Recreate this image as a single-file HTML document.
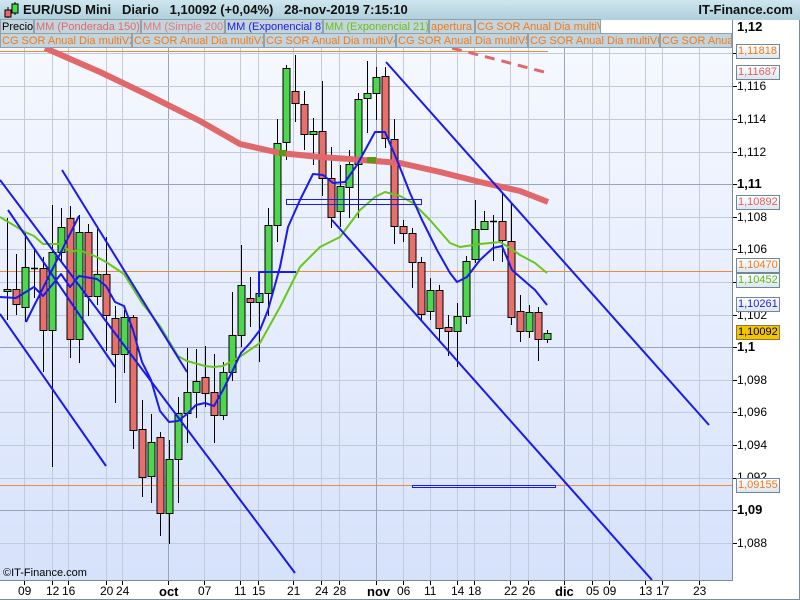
<!DOCTYPE html>
<html><head><meta charset="utf-8"><style>
*{margin:0;padding:0;box-sizing:border-box}
body{width:800px;height:600px;overflow:hidden;background:#fff;font-family:"Liberation Sans",sans-serif;position:relative}
#hdr{position:absolute;left:0;top:0;width:800px;height:20px;background:linear-gradient(#cfe6ef,#aecfdc);}
#hdr .t{position:absolute;left:23px;top:2px;font-size:13px;font-weight:bold;color:#111;white-space:pre}
#hdr .r{position:absolute;right:7px;top:2px;font-size:13px;font-weight:bold;color:#111}
.lg{position:absolute;height:15px;font-size:11px;line-height:14px;background:#c3d4dd;border:1px solid #8ea2ae;padding:0 1px;white-space:nowrap;overflow:hidden}
.ax{position:absolute;left:737px;font-size:12px;color:#000}
.b{font-weight:bold;font-size:13px}
.pl{position:absolute;left:736px;width:44px;height:15px;font-size:11px;line-height:13px;border:1px solid #6f8797;background:linear-gradient(#fff,#dce5ef);padding-left:1px;white-space:nowrap;overflow:hidden}
.dl{position:absolute;top:584px;font-size:12px;color:#000}
</style></head><body>
<div id="hdr">
<svg style="position:absolute;left:3px;top:1px" width="18" height="18"><line x1="5" y1="6" x2="5" y2="17" stroke="#000"/><rect x="2" y="9" width="6" height="7" fill="#e66" stroke="#000"/><line x1="12" y1="1" x2="12" y2="14" stroke="#000"/><rect x="9" y="3" width="6" height="9" fill="#4d4" stroke="#000"/></svg>
<span class="t">EUR/USD Mini   Diario   1,10092 (+0,04%)   28-nov-2019 7:15:10</span>
<span class="r">IT-Finance.com</span>
</div>
<svg style="position:absolute;left:0;top:0" width="800" height="600" id="ch">
<defs><linearGradient id="bg" x1="0" y1="0" x2="0" y2="1"><stop offset="0" stop-color="#f6f8ff"/><stop offset="1" stop-color="#d6e2fb"/></linearGradient></defs>
<rect x="0" y="48" width="732" height="532" fill="url(#bg)"/>
<g id="grid" stroke="#b8c3d6" stroke-width="1"></g>
<g id="hl"></g>
<g id="cd"></g>
<g id="ln" fill="none"></g>
<line x1="732.5" y1="20" x2="732.5" y2="580" stroke="#7a8c9a"/>
<line x1="0" y1="580.5" x2="733" y2="580.5" stroke="#7a8c9a"/>
<line x1="799.5" y1="20" x2="799.5" y2="600" stroke="#7a8c9a"/>
<line x1="0" y1="599.5" x2="800" y2="599.5" stroke="#7a8c9a"/>
<g id="tk" stroke="#000"></g>
</svg>
<div class="lg" style="left:0;top:19px;width:34px;color:#000">Precio</div>
<div class="lg" style="left:34px;top:19px;width:107px;color:#e06a6a">MM (Ponderada 150)</div>
<div class="lg" style="left:141px;top:19px;width:84px;color:#e07a7a">MM (Simple 200)</div>
<div class="lg" style="left:225px;top:19px;width:98px;color:#1a1aee">MM (Exponencial 8)</div>
<div class="lg" style="left:323px;top:19px;width:106px;color:#6ac21a">MM (Exponencial 21)</div>
<div class="lg" style="left:429px;top:19px;width:46px;color:#f07a1a">apertura</div>
<div class="lg" style="left:475px;top:19px;width:126px;color:#f07a1a">CG SOR Anual Dia multiV</div>
<div class="lg" style="left:0;top:33px;width:132px;color:#f07a1a">CG SOR Anual Dia multiV2</div>
<div class="lg" style="left:132px;top:33px;width:132px;color:#f07a1a">CG SOR Anual Dia multiV3</div>
<div class="lg" style="left:264px;top:33px;width:132px;color:#f07a1a">CG SOR Anual Dia multiV4</div>
<div class="lg" style="left:396px;top:33px;width:132px;color:#f07a1a">CG SOR Anual Dia multiV5</div>
<div class="lg" style="left:528px;top:33px;width:132px;color:#f07a1a">CG SOR Anual Dia multiV6</div>
<div class="lg" style="left:660px;top:33px;width:72px;color:#f07a1a">CG SOR Anual</div>
<div class="ax b" style="top:19px">1,12</div>
<div class="ax" style="top:79px">1,116</div>
<div class="ax" style="top:112px">1,114</div>
<div class="ax" style="top:145px">1,112</div>
<div class="ax b" style="top:176px">1,11</div>
<div class="ax" style="top:210px">1,108</div>
<div class="ax" style="top:242px">1,106</div>
<div class="ax" style="top:308px">1,102</div>
<div class="ax b" style="top:339px">1,1</div>
<div class="ax" style="top:373px">1,098</div>
<div class="ax" style="top:405px">1,096</div>
<div class="ax" style="top:438px">1,094</div>
<div class="ax" style="top:470px">1,092</div>
<div class="ax b" style="top:502px">1,09</div>
<div class="ax" style="top:536px">1,088</div>
<div class="pl" style="top:44px;color:#f07a1a">1,11818</div>
<div class="pl" style="top:65px;color:#e06060">1,11687</div>
<div class="pl" style="top:195px;color:#e06060">1,10892</div>
<div class="pl" style="top:258px;color:#f07a1a">1,10470</div>
<div class="pl" style="top:273px;color:#5cb814">1,10452</div>
<div class="pl" style="top:297px;color:#1a1aee">1,10261</div>
<div class="pl" style="top:325px;color:#000;background:#f5c400;border-color:#8a7a40">1,10092</div>
<div class="pl" style="top:478px;color:#f07a1a">1,09155</div>
<div style="position:absolute;left:3px;top:567px;font-size:11px;color:#000">©IT-Finance.com</div>
<div id="dates"></div>
<script>
var NS="http://www.w3.org/2000/svg";
function el(p,t,a){var e=document.createElementNS(NS,t);for(var k in a)e.setAttribute(k,a[k]);document.getElementById(p).appendChild(e);return e;}
var dl=[[24,"09"],[52,"12"],[68,"16"],[106,"20"],[122,"24"],[168,"oct",1],[204,"07"],[240,"11"],[258,"15"],[293,"21"],[321,"24"],[339,"28"],[376,"nov",1],[403,"06"],[430,"11"],[457,"14"],[474,"18"],[510,"22"],[528,"26"],[564,"dic",1],[592,"05"],[609,"09"],[645,"13"],[662,"17"],[699,"23"]];
var dh="";
dl.forEach(function(d){el("grid","line",{x1:d[0]+.5,y1:48,x2:d[0]+.5,y2:580,stroke:d[2]?"#98a6bc":"#c2cbdc"});el("tk","line",{x1:d[0]+.5,y1:581,x2:d[0]+.5,y2:585});
dh+='<div class="dl" style="left:'+(d[0]-(d[2]?9:6))+'px;'+(d[2]?'font-weight:bold;font-size:13px;':'')+'">'+d[1]+'</div>';});
document.getElementById("dates").innerHTML=dh;
[[53,0],[86,0],[119,0],[152,0],[184,1],[217,0],[249,0],[282,0],[315,0],[347,1],[380,0],[412,0],[445,0],[478,0],[510,1],[543,0]].forEach(function(g){el("grid","line",{x1:0,y1:g[0]+.5,x2:732,y2:g[0]+.5,stroke:g[1]?"#98a6bc":"#c2cbdc"});el("tk","line",{x1:733,y1:g[0]+.5,x2:737,y2:g[0]+.5});});
[[51,"#f08a3a",548],[271,"#f08a3a",732],[485,"#f08a3a",732]].forEach(function(h){el("hl","line",{x1:0,y1:h[0]+.5,x2:h[2],y2:h[0]+.5,stroke:h[1]});});
var C=[[289,291,218,320,1],[289,304,254,315,0],[267,307,233,322,1],[268,268,250,298,2],[268,330,257,372,0],[252,330,205,467,1],[227,252,208,262,1],[218,339,206,358,0],[232,339,215,363,1],[232,296,224,316,0],[274,296,229,305,1],[274,315,237,351,0],[318,354,306,403,0],[317,354,310,373,1],[317,430,315,449,0],[429,477,400,497,0],[442,476,414,503,1],[437,513,432,536,0],[459,513,440,544,1],[413,459,397,503,1],[392,413,348,443,1],[381,392,349,418,1],[377,393,346,407,0],[392,415,354,443,0],[372,415,362,420,1],[335,372,292,381,1],[285,335,245,347,1],[298,302,277,327,0],[293,302,272,362,1],[225,293,208,316,1],[143,225,119,242,1],[68,142,65,160,1],[91,103,55,122,0],[104,134,91,150,0],[131,134,118,165,1],[131,178,81,196,0],[178,217,147,228,0],[186,211,165,227,1],[164,187,150,218,1],[99,164,93,218,1],[93,98,61,133,1],[77,93,67,120,1],[76,138,67,148,0],[139,226,119,244,0],[226,233,220,242,0],[233,262,228,288,0],[262,314,257,320,0],[290,311,278,320,1],[290,328,285,341,0],[327,331,315,356,0],[316,331,303,367,1],[261,316,256,324,1],[229,259,200,263,1],[221,229,211,230,1],[221,221,215,261,2],[221,240,193,262,0],[241,317,203,325,0],[311,331,295,342,0],[312,331,305,338,1],[312,339,307,361,0],[333,339,330,343,1]];
C.forEach(function(c,i){var x=7+9*i;el("cd","line",{x1:x+.5,y1:c[2],x2:x+.5,y2:c[3],stroke:"#000"});
if(c[4]==2){el("cd","line",{x1:x-3,y1:c[0]+.5,x2:x+4,y2:c[0]+.5,stroke:"#000","stroke-width":1.5});}
else el("cd","rect",{x:x-3,y:c[0]+.5,width:7,height:Math.max(c[1]-c[0],2),fill:c[4]?"#4fd64f":"#e8706c",stroke:"#000"});});
function pl(pts,col,w,extra){var a={points:pts,stroke:col,"stroke-width":w,"stroke-linejoin":"round"};for(var k in extra)a[k]=extra[k];el("ln","polyline",a);}
pl("45,48 100,72 150,96 200,121 240,144 280,153 320,157 350,159 400,163 440,172 480,182 520,191 548,202","#e0686a",6);
el("ln","line",{x1:279,y1:153,x2:286,y2:153,stroke:"#5a9a10","stroke-width":6});
el("ln","line",{x1:367,y1:160,x2:376,y2:160,stroke:"#5a9a10","stroke-width":6});
pl("452,48 548,73","#e0686a",3,{"stroke-dasharray":"10,7"});
pl("0,217 25,232 34,236 43,244 61,244 70,252 79,250 97,257 106,262 124,274 142,303 160,326 178,356 187,361 205,366 214,367 223,366 232,361 241,356 260,343 280,307 300,267 320,247 340,237 360,210 375,197 385,192 400,196 413,203 430,220 450,243 460,247 480,244 500,242 510,248 520,255 535,263 547,273","#6ac61a",2);
pl("0,297 16,298 34,287 43,296 61,274 70,287 79,276 97,279 106,286 115,302 124,306 133,330 142,362 151,380 160,411 169,422 178,421 187,414 196,405 205,403 214,406 223,390 232,372 241,353 250,343 260,330 268,310 280,267 288,227 300,200 313,174 323,175 333,183 345,182 357,165 375,132 385,132 397,160 410,193 422,220 437,250 450,273 457,282 467,277 480,260 493,248 502,246 512,270 520,277 535,290 547,305","#1a1aee",2);
[[0,180,295,573],[0,314,106,466],[8,210,115,367],[62,170,187,372],[26,322,79,216],[332,220,652,580],[386,62,709,425]].forEach(function(l){el("ln","line",{x1:l[0],y1:l[1],x2:l[2],y2:l[3],stroke:"#1a1aee","stroke-width":2});});
pl("259,297 259,272 296,272","#1a1aee",2);
el("ln","rect",{x:286.5,y:199.5,width:135,height:5,stroke:"#1a1aee","stroke-width":1});
el("ln","rect",{x:412.5,y:485.5,width:143,height:2,stroke:"#1a1aee","stroke-width":1});
</script>
</body></html>
